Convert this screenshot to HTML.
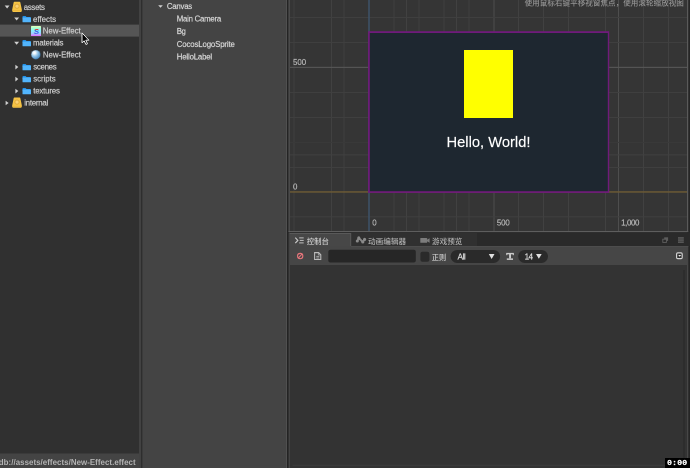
<!DOCTYPE html>
<html lang="zh"><head><meta charset="utf-8"><title>Cocos Creator</title><style>
html,body{margin:0;padding:0;background:#333;}
body{width:690px;height:468px;overflow:hidden;position:relative;font-family:"Liberation Sans","Noto Sans CJK SC",sans-serif;}
svg{position:absolute;left:0;top:0;}
#tl{position:absolute;left:0;top:0;width:1380px;height:936px;transform-origin:0 0;transform:scale(0.5);will-change:transform;}
.t{position:absolute;line-height:24px;white-space:nowrap;-webkit-text-stroke:0.35px currentColor;}
.c{-webkit-text-stroke:0;}
.m{font-weight:500;}
</style></head><body>
<svg width="690" height="468" viewBox="0 0 690 468">
<!-- panels -->
<rect x="0" y="0" width="139" height="468" fill="#303030"/>
<rect x="139" y="0" width="2.4" height="468" fill="#424242"/>
<rect x="141.4" y="0" width="1" height="468" fill="#282828"/>
<rect x="142.4" y="0" width="143.6" height="468" fill="#444"/>
<rect x="286" y="0" width="1" height="468" fill="#505050"/>
<rect x="287" y="0" width="3" height="468" fill="#242424"/>
<rect x="288.6" y="0" width="1.2" height="232.2" fill="#606060"/>
<rect x="288.7" y="233" width="1" height="235" fill="#525252"/>
<rect x="687" y="0" width="3" height="468" fill="#262626"/>
<!-- assets tree -->
<rect x="0" y="24.6" width="139" height="12" fill="#555"/>
<rect x="0" y="453.5" width="139" height="14.5" fill="#444"/>
<path d="M4.7 5.5H9.5L7.10 8.4Z" fill="#d0d0d0"/>
<path d="M14.2 17.5H19.1L16.65 20.4Z" fill="#d0d0d0"/>
<path d="M14.2 41.8H19.1L16.65 44.7Z" fill="#d0d0d0"/>
<path d="M15.4 64.8V69.4L18.3 67.10Z" fill="#d0d0d0"/>
<path d="M15.4 76.8V81.4L18.3 79.10Z" fill="#d0d0d0"/>
<path d="M15.4 88.8V93.4L18.3 91.10Z" fill="#d0d0d0"/>
<path d="M5.6 100.7V105.3L8.6 103.00Z" fill="#d0d0d0"/>
<g transform="translate(12.1,1.7)"><path d="M2.3 0h5.2q.6 0 .75.7l1.5 7.3q.25 2.2-1.1 2.2h-7.5q-1.35 0-1.1-2.2l1.5-7.3q.15-.7.75-.7z" fill="#f6c445"/><circle cx="4.9" cy="4.5" r="2.15" fill="#fbd273" stroke="#dca436" stroke-width=".85"/><rect x="0.6" y="8.3" width="8.6" height=".5" fill="#e2ad3a"/></g>
<g transform="translate(12.1,97.6)"><path d="M2.3 0h5.2q.6 0 .75.7l1.5 7.3q.25 2.2-1.1 2.2h-7.5q-1.35 0-1.1-2.2l1.5-7.3q.15-.7.75-.7z" fill="#f6c445"/><circle cx="4.9" cy="4.5" r="2.15" fill="#fbd273" stroke="#dca436" stroke-width=".85"/><rect x="0.6" y="8.3" width="8.6" height=".5" fill="#e2ad3a"/></g>
<g transform="translate(22.5,15.8)"><path d="M0 .9q0-.7.7-.7h2.4l.9 1h3.6q.7 0 .7.7v.6h-8.3z" fill="#2290e8"/><rect x="0" y="1.6" width="8.5" height="4.8" rx=".5" fill="#52b4fb"/></g>
<g transform="translate(22.5,39.9)"><path d="M0 .9q0-.7.7-.7h2.4l.9 1h3.6q.7 0 .7.7v.6h-8.3z" fill="#2290e8"/><rect x="0" y="1.6" width="8.5" height="4.8" rx=".5" fill="#52b4fb"/></g>
<g transform="translate(22.5,63.9)"><path d="M0 .9q0-.7.7-.7h2.4l.9 1h3.6q.7 0 .7.7v.6h-8.3z" fill="#2290e8"/><rect x="0" y="1.6" width="8.5" height="4.8" rx=".5" fill="#52b4fb"/></g>
<g transform="translate(22.5,75.9)"><path d="M0 .9q0-.7.7-.7h2.4l.9 1h3.6q.7 0 .7.7v.6h-8.3z" fill="#2290e8"/><rect x="0" y="1.6" width="8.5" height="4.8" rx=".5" fill="#52b4fb"/></g>
<g transform="translate(22.5,87.9)"><path d="M0 .9q0-.7.7-.7h2.4l.9 1h3.6q.7 0 .7.7v.6h-8.3z" fill="#2290e8"/><rect x="0" y="1.6" width="8.5" height="4.8" rx=".5" fill="#52b4fb"/></g>
<defs><linearGradient id="eg" x1="0" y1="0" x2="0" y2="1"><stop offset="0" stop-color="#eeffb4"/><stop offset=".22" stop-color="#a4ffd6"/><stop offset=".5" stop-color="#84f0ff"/><stop offset=".78" stop-color="#a4c8ff"/><stop offset="1" stop-color="#e46cff"/></linearGradient><linearGradient id="sl" x1="0" y1="0" x2="0" y2="1"><stop offset="0" stop-color="#e61e1e"/><stop offset=".3" stop-color="#e61e1e"/><stop offset=".42" stop-color="#2f4fe0"/><stop offset="1" stop-color="#5a6af0"/></linearGradient><radialGradient id="sg" cx=".35" cy=".3" r=".75"><stop offset="0" stop-color="#ffffff"/><stop offset=".16" stop-color="#eef7fd"/><stop offset=".5" stop-color="#8fc3e8"/><stop offset="1" stop-color="#3f80b8"/></radialGradient></defs>
<rect x="31" y="25.9" width="10" height="10" rx=".5" fill="url(#eg)"/>
<text x="33.7" y="33.8" font-family="Liberation Sans, sans-serif" font-size="7.8" font-weight="bold" font-style="italic" fill="url(#sl)">S</text>
<circle cx="35.8" cy="54.7" r="4.75" fill="url(#sg)" stroke="#2c3a46" stroke-width=".4"/>
<!-- hierarchy -->
<path d="M158.2 5.2H162.8L160.50 7.8Z" fill="#d0d0d0"/>
<!-- scene view -->
<rect x="289.7" y="0" width="397.5" height="231.2" fill="#353535"/>
<rect x="687.1" y="0" width="1.1" height="232" fill="#606060"/>
<rect x="293.5" y="0" width="1" height="231.2" fill="#414141"/>
<rect x="331.0" y="0" width="1" height="231.2" fill="#414141"/>
<rect x="343.5" y="0" width="1" height="231.2" fill="#414141"/>
<rect x="393.5" y="0" width="1" height="231.2" fill="#414141"/>
<rect x="406.0" y="0" width="1" height="231.2" fill="#414141"/>
<rect x="418.5" y="0" width="1" height="231.2" fill="#414141"/>
<rect x="443.5" y="0" width="1" height="231.2" fill="#414141"/>
<rect x="456.0" y="0" width="1" height="231.2" fill="#414141"/>
<rect x="468.5" y="0" width="1" height="231.2" fill="#414141"/>
<rect x="518.0" y="0" width="1" height="231.2" fill="#414141"/>
<rect x="543.0" y="0" width="1" height="231.2" fill="#414141"/>
<rect x="568.0" y="0" width="1" height="231.2" fill="#414141"/>
<rect x="605.0" y="0" width="1" height="231.2" fill="#414141"/>
<rect x="643.0" y="0" width="1" height="231.2" fill="#414141"/>
<rect x="668.0" y="0" width="1" height="231.2" fill="#414141"/>
<rect x="493.5" y="0" width="1" height="231.2" fill="#4e4e4e"/>
<rect x="618.0" y="0" width="1" height="231.2" fill="#4e4e4e"/>
<rect x="290" y="141.9" width="397" height="1" fill="#3a3a3a"/>
<rect x="290" y="16.9" width="397" height="1" fill="#414141"/>
<rect x="290" y="41.9" width="397" height="1" fill="#414141"/>
<rect x="290" y="91.9" width="397" height="1" fill="#414141"/>
<rect x="290" y="116.9" width="397" height="1" fill="#414141"/>
<rect x="290" y="154.4" width="397" height="1" fill="#414141"/>
<rect x="290" y="166.9" width="397" height="1" fill="#414141"/>
<rect x="290" y="216.3" width="397" height="1" fill="#414141"/>
<rect x="290" y="66.8" width="397" height="1.1" fill="#585858"/>
<rect x="290" y="191.2" width="397" height="1.5" fill="#6b5a36"/>
<rect x="368.2" y="0" width="1.6" height="231.2" fill="#3d5166"/>
<rect x="368.1" y="31.2" width="241.1" height="161.7" fill="#6f1b7a"/>
<rect x="369.8" y="33" width="238" height="158.2" fill="#1e2730"/>
<rect x="464" y="50" width="49" height="68" fill="#ffff00"/>
<!-- console -->
<rect x="288.6" y="231" width="399.6" height="1.2" fill="#5e5e5e"/>
<rect x="290" y="232.3" width="400" height="14" fill="#2a2a2a"/>
<rect x="351" y="233" width="126" height="13.3" fill="#303030"/>
<rect x="289.7" y="233" width="61.3" height="13.3" fill="#474747"/>
<rect x="289.7" y="233" width="61.3" height="0.9" fill="#5c5c5c"/>
<rect x="350.3" y="233" width="0.9" height="13" fill="#5a5a5a"/>
<rect x="290" y="246.0" width="398.3" height="19" fill="#464646"/>
<rect x="351" y="246.0" width="337.3" height="0.9" fill="#4e4e4e"/>
<rect x="290" y="265.0" width="397" height="203" fill="#333"/>
<rect x="687" y="265" width="1.3" height="203" fill="#474747"/>
<rect x="683.1" y="270" width="1.8" height="194" fill="#2d2d2d"/>
<rect x="292.5" y="464.7" width="390" height="1" fill="#3e3e3e"/>
<rect x="328.3" y="249.8" width="87.5" height="12.8" rx="2" fill="#262626"/>
<rect x="420.4" y="251.8" width="9" height="10" rx="2" fill="#2a2a2a"/>
<rect x="450.6" y="249.9" width="49.5" height="13" rx="6.5" fill="#2a2a2a"/>
<rect x="518.2" y="249.9" width="29.8" height="13" rx="6.5" fill="#2a2a2a"/>
<g stroke="#c8c8c8" fill="none"><path d="M295.3 237.7l2.5 2.7-2.5 2.7" stroke-width="1.2"/><path d="M299.2 237.9h4.5M299.8 240.4h3.9M299.2 242.9h4.5" stroke-width=".95"/></g>
<g fill="#8a8a8a" stroke="#868686"><path d="M357.3 241l1.5-3.1 4 4.1 1.8-2.6" fill="none" stroke-width="1.9" stroke-linejoin="round"/><g stroke="none"><circle cx="357.3" cy="241" r="1.55"/><circle cx="358.8" cy="237.9" r="1.55"/><circle cx="362.8" cy="242" r="1.55"/><circle cx="364.6" cy="239.4" r="1.55"/></g></g>
<g fill="#7c7c7c"><rect x="420.3" y="238" width="6.8" height="4.8" rx=".4"/><path d="M426.9 239.7l2.7-1.5v4.5l-2.7-1.5z"/></g>
<rect x="664.2" y="237.3" width="3.9" height="3.6" fill="#5c5c5c"/><rect x="662.8" y="239.2" width="3.6" height="3.2" fill="#2a2a2a" stroke="#606060" stroke-width=".9"/>
<g fill="#5c5c5c"><rect x="678" y="237.2" width="5.8" height="1.5"/><rect x="678" y="239.3" width="5.8" height="1.5"/><rect x="678" y="241.4" width="5.8" height="1.5"/></g>
<g stroke="#e8767c" stroke-width="1.05" fill="none"><circle cx="300.2" cy="256" r="2.65"/><path d="M298.4 257.8l3.6-3.6"/></g>
<g stroke="#bcbcbc" stroke-width="1.05" fill="none"><path d="M314.6 252.6h4l2.2 2.2v4.7h-6.2z"/><path d="M318.4 252.8v2.2h2.2" stroke-width=".7"/><path d="M316.3 256.4h3M316.3 258h3" stroke-width=".8"/></g>
<path d="M488.8 254.1H494.5L491.65 258.9Z" fill="#e0e0e0"/>
<path d="M536 254.0H541.7L538.85 258.7Z" fill="#e0e0e0"/>
<g fill="#cacaca"><rect x="506.3" y="252.9" width="7.5" height="1.4"/><rect x="506.3" y="253.5" width="1" height="1.7"/><rect x="512.8" y="253.5" width="1" height="1.7"/><rect x="509.1" y="254" width="1.9" height="4.6"/><rect x="506.8" y="258.4" width="6.2" height="1.5"/></g>
<rect x="676.6" y="252.9" width="5.6" height="5.7" rx="1.1" fill="#303030" stroke="#d2d2d2" stroke-width="1.2"/><path d="M678.2 254.9h3l-1.5 1.9z" fill="#ededed"/>
<!-- recorder timer -->
<rect x="665" y="458" width="25" height="10" fill="#000"/>
</svg>
<div id="tl">
<span class="t c" style="left:-2.4px;top:912.7px;font-size:15.80px;color:#b4b4b4;letter-spacing:0.09px;font-weight:bold;">db://assets/effects/New-Effect.effect</span>
<span class="t" style="left:47.4px;top:2.7px;font-size:15.80px;color:#cfcfcf;letter-spacing:-0.61px;">assets</span>
<span class="t" style="left:66.0px;top:26.7px;font-size:15.80px;color:#cfcfcf;letter-spacing:-0.01px;">effects</span>
<span class="t" style="left:85.6px;top:49.7px;font-size:15.80px;color:#cfcfcf;letter-spacing:-0.14px;">New-Effect</span>
<span class="t" style="left:66.0px;top:73.7px;font-size:15.80px;color:#cfcfcf;letter-spacing:-0.41px;">materials</span>
<span class="t" style="left:85.8px;top:97.7px;font-size:15.80px;color:#cfcfcf;letter-spacing:-0.12px;">New-Effect</span>
<span class="t" style="left:66.4px;top:121.7px;font-size:15.80px;color:#cfcfcf;letter-spacing:-0.61px;">scenes</span>
<span class="t" style="left:66.4px;top:145.7px;font-size:15.80px;color:#cfcfcf;letter-spacing:-0.09px;">scripts</span>
<span class="t" style="left:66.4px;top:169.7px;font-size:15.80px;color:#cfcfcf;letter-spacing:-0.38px;">textures</span>
<span class="t" style="left:48.4px;top:194.3px;font-size:15.80px;color:#cfcfcf;letter-spacing:-0.53px;">internal</span>
<span class="t" style="left:333.8px;top:1.3px;font-size:15.60px;color:#d8d8d8;letter-spacing:-0.45px;">Canvas</span>
<span class="t" style="left:353.6px;top:26.3px;font-size:15.60px;color:#d8d8d8;letter-spacing:-0.48px;">Main Camera</span>
<span class="t" style="left:353.6px;top:51.3px;font-size:15.60px;color:#d8d8d8;letter-spacing:-0.94px;">Bg</span>
<span class="t" style="left:353.6px;top:76.5px;font-size:15.60px;color:#d8d8d8;letter-spacing:-0.25px;">CocosLogoSprite</span>
<span class="t" style="left:353.6px;top:102.3px;font-size:15.60px;color:#d8d8d8;letter-spacing:-0.33px;">HelloLabel</span>
<span class="t" style="left:893.0px;top:272.1px;font-size:29.40px;color:#fff;letter-spacing:0.02px;">Hello, World!</span>
<span class="t" style="left:586.0px;top:113.3px;font-size:15.80px;color:#b8b8b8;letter-spacing:0.01px;">500</span>
<span class="t" style="left:586.0px;top:361.9px;font-size:15.80px;color:#b8b8b8;">0</span>
<span class="t" style="left:744.6px;top:434.1px;font-size:15.80px;color:#b8b8b8;">0</span>
<span class="t" style="left:993.8px;top:434.1px;font-size:15.80px;color:#b8b8b8;letter-spacing:-0.25px;">500</span>
<span class="t" style="left:1242.2px;top:434.1px;font-size:15.80px;color:#b8b8b8;letter-spacing:-0.71px;">1,000</span>
<span class="t c m" style="left:1049.2px;top:-6.5px;font-size:15.18px;color:#959595;">使用鼠标右键平移视窗焦点，使用滚轮缩放视图</span>
<span class="t c m" style="left:613.4px;top:471.0px;font-size:14.80px;color:#d0d0d0;">控制台</span>
<span class="t c m" style="left:736.0px;top:470.5px;font-size:15.28px;color:#b0b0b0;">动画编辑器</span>
<span class="t c m" style="left:864.0px;top:470.5px;font-size:15.20px;color:#b0b0b0;">游戏预览</span>
<span class="t c m" style="left:863.6px;top:503.0px;font-size:14.40px;color:#cccccc;">正则</span>
<span class="t" style="left:915.0px;top:500.8px;font-size:16.40px;color:#e0e0e0;letter-spacing:-0.94px;">All</span>
<span class="t" style="left:1049.2px;top:500.8px;font-size:16.40px;color:#e0e0e0;letter-spacing:-1.22px;">14</span>
<span class="t" style="left:1333.8px;top:914.5px;font-size:13.80px;color:#fff;font-family:'Liberation Mono',monospace;font-weight:bold;transform-origin:0 0;transform:scaleX(1.22);">0:00</span>
</div>
<svg width="690" height="468" viewBox="0 0 690 468"><path d="M82 32.9v9.9l2.2-2 1.7 3.7 1.6-.7-1.7-3.6h3.1z" fill="#000" stroke="#fff" stroke-width=".9" stroke-linejoin="round"/></svg>
</body></html>
